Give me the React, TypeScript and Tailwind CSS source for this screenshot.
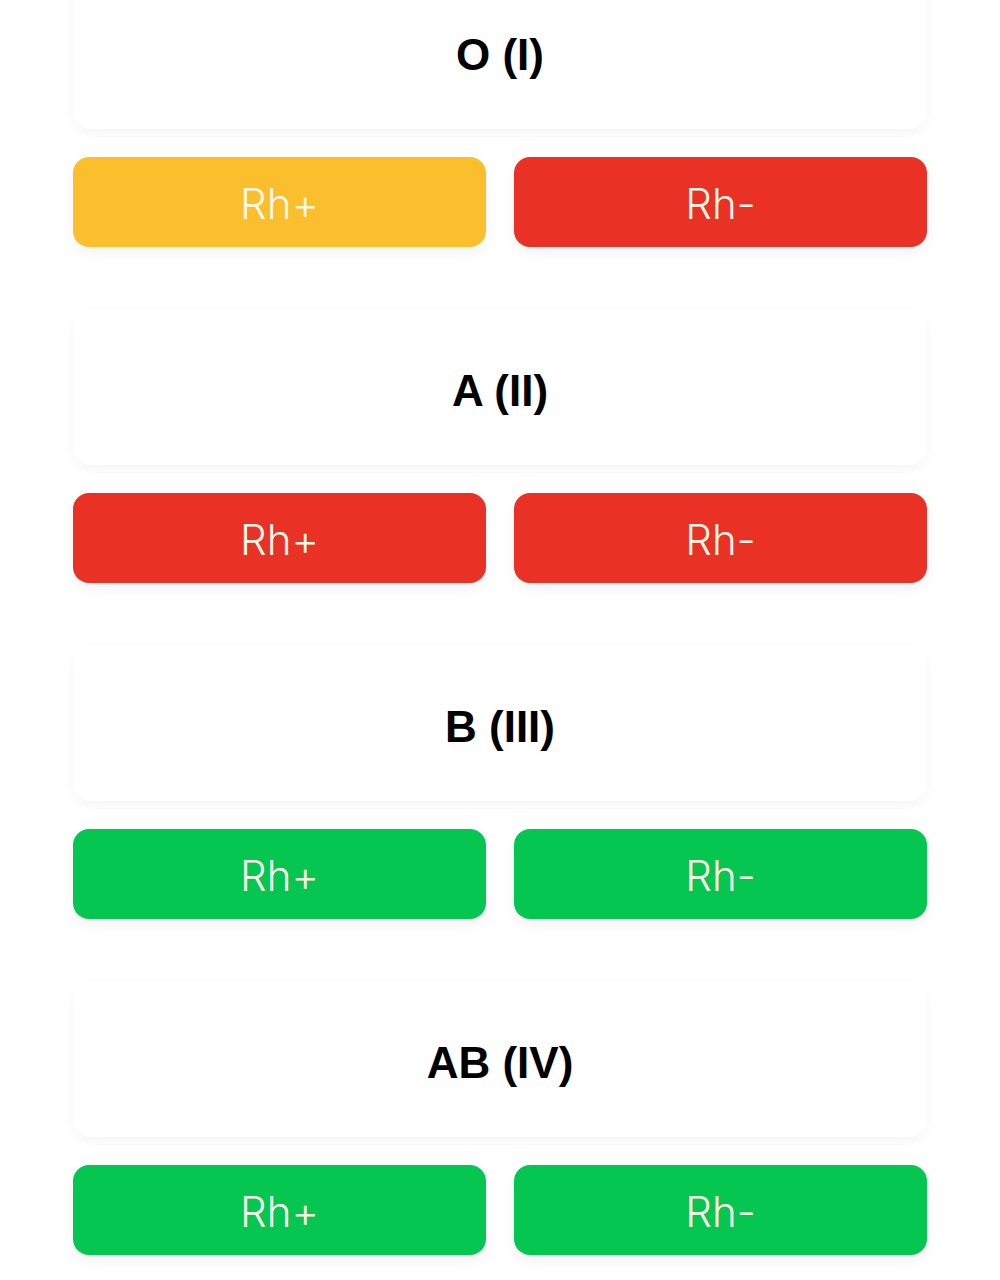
import React from "react";

type Tone = "yellow" | "red" | "green";

type Group = {
  title: string;
  plus: Tone;
  minus: Tone;
};

const toneClass: Record<Tone, string> = {
  yellow: "bg-[#fbbe2d]",
  red: "bg-[#e93125]",
  green: "bg-[#06c652]",
};

const groups: Group[] = [
  { title: "O (I)", plus: "yellow", minus: "red" },
  { title: "A (II)", plus: "red", minus: "red" },
  { title: "B (III)", plus: "green", minus: "green" },
  { title: "AB (IV)", plus: "green", minus: "green" },
];

function RhButton({ label, tone }: { label: string; tone: Tone }) {
  return (
    <button
      className={`${toneClass[tone]} flex h-[90px] items-center justify-center rounded-[16px] pt-[2px] text-[42px] font-light text-[#fdf8e8] shadow-[0_6px_14px_rgba(0,0,0,0.05)]`}
      style={{ fontFamily: "Inter, 'Noto Sans', sans-serif" }}
    >
      {label}
    </button>
  );
}

export default function App() {
  return (
    <div className="min-h-[1280px] overflow-hidden bg-white">
      <div className="-mt-[27px] flex flex-col gap-[62px] px-[73px]">
        {groups.map((group) => (
          <section key={group.title} className="flex flex-col gap-[28px]">
            <div className="flex h-[156px] items-center justify-center rounded-[18px] bg-white pt-[8px] shadow-[0_4px_12px_rgba(0,0,0,0.045)]">
              <h2
                className="text-[44px] font-bold text-black"
                style={{ fontFamily: "'Liberation Sans', Arial, sans-serif" }}
              >
                {group.title}
              </h2>
            </div>
            <div className="grid grid-cols-2 gap-[28px]">
              <RhButton label="Rh+" tone={group.plus} />
              <RhButton label="Rh-" tone={group.minus} />
            </div>
          </section>
        ))}
      </div>
    </div>
  );
}
